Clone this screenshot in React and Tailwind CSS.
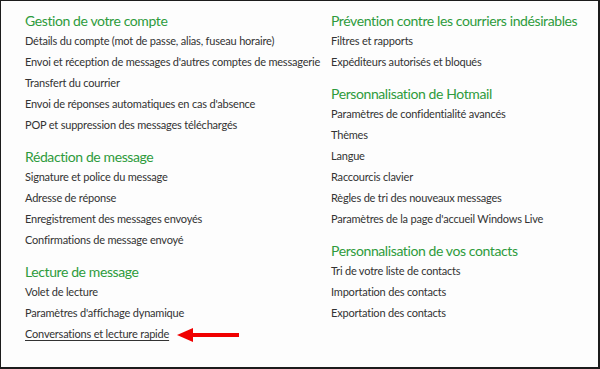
const groupsLeft = [
  {
    title: "Gestion de votre compte",
    items: [
      "Détails du compte (mot de passe, alias, fuseau horaire)",
      "Envoi et réception de messages d'autres comptes de messagerie",
      "Transfert du courrier",
      "Envoi de réponses automatiques en cas d'absence",
      "POP et suppression des messages téléchargés",
    ],
  },
  {
    title: "Rédaction de message",
    items: [
      "Signature et police du message",
      "Adresse de réponse",
      "Enregistrement des messages envoyés",
      "Confirmations de message envoyé",
    ],
  },
  {
    title: "Lecture de message",
    items: [
      "Volet de lecture",
      "Paramètres d'affichage dynamique",
      "Conversations et lecture rapide",
    ],
  },
];

const groupsRight = [
  {
    title: "Prévention contre les courriers indésirables",
    items: ["Filtres et rapports", "Expéditeurs autorisés et bloqués"],
  },
  {
    title: "Personnalisation de Hotmail",
    items: [
      "Paramètres de confidentialité avancés",
      "Thèmes",
      "Langue",
      "Raccourcis clavier",
      "Règles de tri des nouveaux messages",
      "Paramètres de la page d'accueil Windows Live",
    ],
  },
  {
    title: "Personnalisation de vos contacts",
    items: [
      "Tri de votre liste de contacts",
      "Importation des contacts",
      "Exportation des contacts",
    ],
  },
];

const RedArrow = () => (
  <svg width="64" height="14" viewBox="0 0 64 14" className="ml-[8px] shrink-0">
    <polygon points="0,7 16,0 16,14" fill="#f00000" />
    <rect x="14" y="5" width="48" height="4" fill="#f00000" />
  </svg>
);

function Group({ group, arrowOn }) {
  return (
    <div className="mb-[10px]">
      <h3 className="h-[21px] whitespace-nowrap text-[14px] leading-[21px] tracking-[-0.4px] text-[#2e9b3c]">
        {group.title}
      </h3>
      <ul>
        {group.items.map((item) => (
          <li
            key={item}
            className="flex h-[21px] items-center whitespace-nowrap text-[11px] tracking-[-0.2px] text-[#333]"
          >
            <a
              href="#"
              className={item === arrowOn ? "underline underline-offset-2" : ""}
            >
              {item}
            </a>
            {item === arrowOn && <RedArrow />}
          </li>
        ))}
      </ul>
    </div>
  );
}

export default function App() {
  return (
    <div
      className="flex h-[369px] w-[600px] border-t border-l border-r-2 border-b-2 border-[#1c1c1c] bg-[#fdfdfd] pt-[9px] pl-[24px]"
      style={{ fontFamily: 'Lato, "Liberation Sans", sans-serif' }}
    >
      <div className="w-[306px]">
        {groupsLeft.map((g) => (
          <Group key={g.title} group={g} arrowOn="Conversations et lecture rapide" />
        ))}
      </div>
      <div className="flex-1">
        {groupsRight.map((g) => (
          <Group key={g.title} group={g} />
        ))}
      </div>
    </div>
  );
}
